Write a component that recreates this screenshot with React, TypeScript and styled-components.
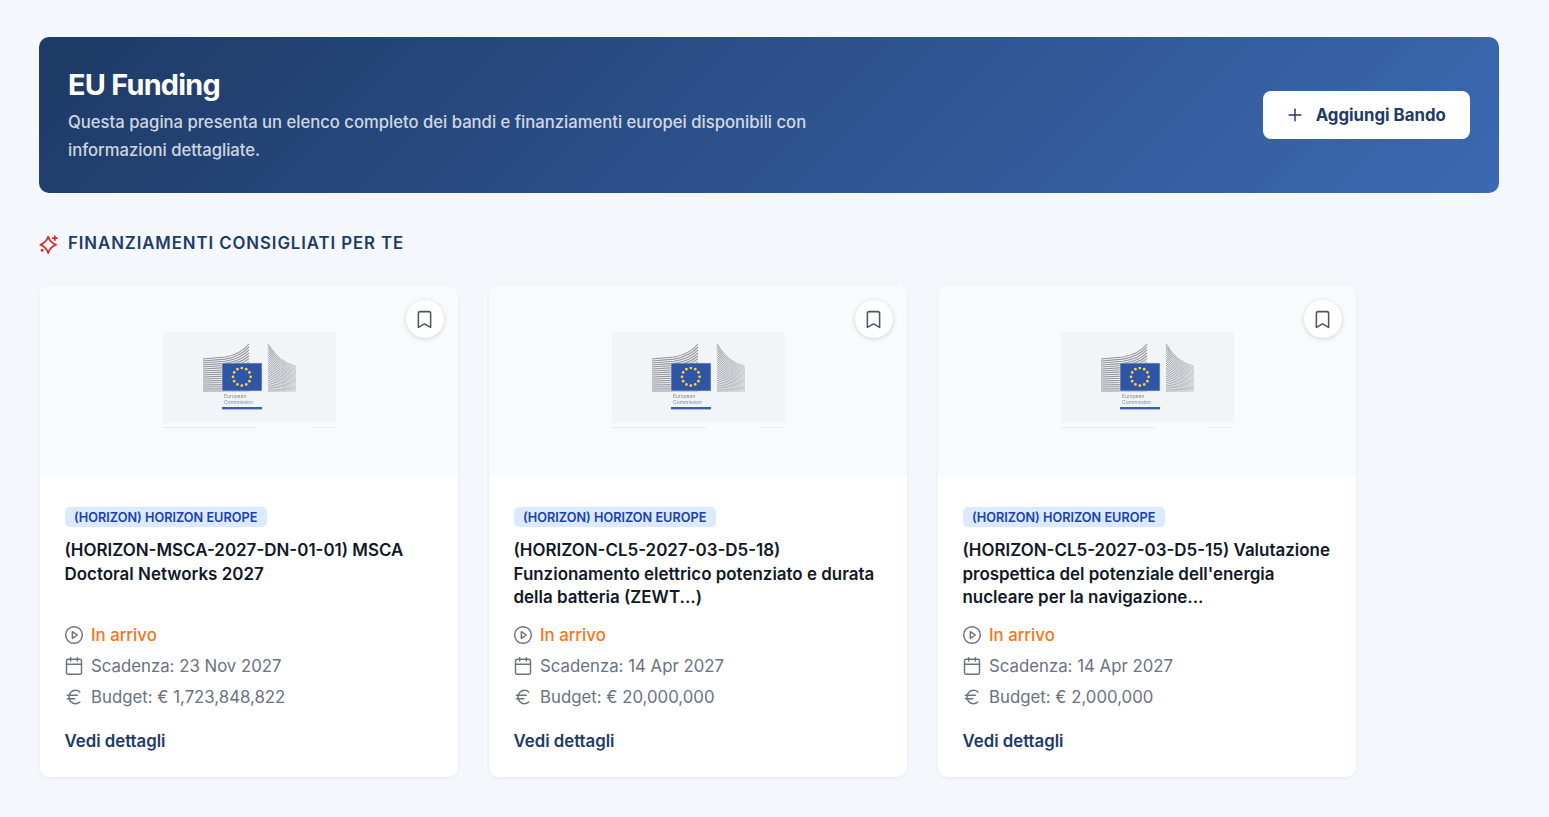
import React from "react";
import styled, { createGlobalStyle } from "styled-components";
import { Bookmark, Calendar, Euro, Plus } from "lucide-react";

const GlobalStyle = createGlobalStyle`
	html, body {
		margin: 0;
		padding: 0;
		background-color: #f4f7fc;
		font-family: Inter, "Liberation Sans", sans-serif;
	}
	* {
		box-sizing: border-box;
	}
`;

const Page = styled.div`
	padding: 37px 50px 40px 39px;
	min-height: 817px;
`;

const Banner = styled.header`
	display: flex;
	justify-content: space-between;
	align-items: center;
	height: 156px;
	padding: 0 29px;
	border-radius: 10px;
	background: linear-gradient(135deg, #1e3a66 0%, #3b69b2 100%);
`;

const BannerTitle = styled.h1`
	margin: 0 0 4px;
	font-size: 28.8px;
	line-height: 38px;
	font-weight: 700;
	letter-spacing: -0.72px;
	color: #ffffff;
`;

const BannerText = styled.p`
	margin: 0;
	max-width: 768px;
	font-size: 16.65px;
	line-height: 28px;
	font-weight: 500;
	color: rgba(255, 255, 255, 0.8);
`;

const AddButton = styled.button`
	display: flex;
	align-items: center;
	justify-content: center;
	gap: 10.5px;
	width: 207px;
	height: 48px;
	padding: 0 2px 0 0;
	border: 0;
	border-radius: 8px;
	background-color: #ffffff;
	color: #1e3a66;
	font-family: inherit;
	font-size: 16.8px;
	font-weight: 700;
`;

const SectionTitle = styled.h2`
	display: flex;
	align-items: center;
	gap: 9px;
	margin: 40px 0 31px;
	font-size: 16.8px;
	line-height: 21px;
	font-weight: 600;
	letter-spacing: 0.92px;
	text-transform: uppercase;
	color: #1e3a66;
`;

const CardRow = styled.div`
	display: flex;
	gap: 31px;
	padding-left: 1px;
`;

const Card = styled.article`
	width: 418px;
	height: 492px;
	border-radius: 10px;
	background-color: #ffffff;
	box-shadow: 0 1px 4px rgba(0, 0, 0, 0.06);
	overflow: hidden;
`;

const CardMedia = styled.div`
	position: relative;
	display: flex;
	justify-content: center;
	padding-top: 47px;
	height: 192px;
	background-color: #f9fafb;
`;

const SaveButton = styled.button`
	position: absolute;
	top: 15px;
	right: 14.5px;
	display: flex;
	align-items: center;
	justify-content: center;
	width: 38px;
	height: 38px;
	padding: 0;
	border: 0;
	border-radius: 50%;
	background-color: #ffffff;
	color: #4b5563;
	box-shadow: 0 1px 5px rgba(0, 0, 0, 0.16);
`;

const CardBody = styled.div`
	padding: 30px 24px 0 24.5px;
`;

const Badge = styled.span`
	display: inline-block;
	height: 20px;
	padding: 0 9.6px;
	border-radius: 5px;
	background-color: #dbeafe;
	color: #1e40af;
	font-size: 12.7px;
	line-height: 21px;
	font-weight: 600;
	vertical-align: top;
`;

const CardTitle = styled.h3`
	height: 72px;
	margin: 12px 0 8px;
	font-size: 16.96px;
	line-height: 23.5px;
	font-weight: 600;
	color: #111827;
`;

const MetaRow = styled.div<{ $accent?: boolean }>`
	display: flex;
	align-items: center;
	gap: 7px;
	height: 31px;
	font-size: 16.8px;
	font-weight: ${(p) => (p.$accent ? 500 : 400)};
	color: ${(p) => (p.$accent ? "#f97316" : "#6b7280")};

	svg {
		flex: none;
		margin-left: -0.5px;
		color: #6b7280;
	}
`;

const DetailLink = styled.a`
	display: block;
	margin-top: 17px;
	font-size: 16.8px;
	line-height: 24px;
	font-weight: 600;
	color: #1e3a66;
`;

const LogoBox = styled.svg`
	display: block;
	filter: blur(0.5px);
`;

const range = (n: number) => Array.from({ length: n }, (_, i) => i);

const CommissionLogo = ({ id }: { id: number }) => (
	<LogoBox width="173" height="97" viewBox="0 0 173 97">
		<defs>
			<linearGradient id={`wing${id}`} gradientUnits="userSpaceOnUse" x1="105" y1="0" x2="133" y2="0">
				<stop offset="0" stopColor="#8f9499" />
				<stop offset="1" stopColor="#c6cacf" />
			</linearGradient>
		</defs>
		<rect width="173" height="91" fill="#f2f5f8" />
		<rect y="95" width="94" height="1" fill="#e3e6ea" />
		<rect x="147" y="95" width="26" height="1" fill="#eceef1" />
		{range(17).map((i) => {
			const t = i / 16;
			const yl = 27 + 32 * t;
			const yr = 12 + 47 * t;
			return (
				<path
					key={`l${i}`}
					d={`M40 ${yl} L62 ${yl - 2 * (1 - t)} Q78 ${yl - 5 * (1 - t)} 86 ${yr}`}
					fill="none"
					stroke="#8f9499"
					strokeWidth="1.1"
				/>
			);
		})}
		{range(23).map((i) => {
			const t = i / 22;
			const yl = 12 + 47 * t;
			const yr = 34 + 25 * t;
			return (
				<path
					key={`r${i}`}
					d={`M105 ${yl} Q116 ${yl + (yr - yl) * 0.85} 133 ${yr}`}
					fill="none"
					stroke={`url(#wing${id})`}
					strokeWidth="0.9"
				/>
			);
		})}
		<rect x="59" y="31" width="40" height="28" fill="#2f55a4" stroke="#d5deee" strokeWidth="0.6" />
		{range(12).map((i) => {
			const a = (i * Math.PI) / 6;
			return (
				<circle
					key={`s${i}`}
					cx={78.8 + 8.8 * Math.cos(a)}
					cy={44.8 + 8.8 * Math.sin(a)}
					r="1.35"
					fill="#f4d93f"
				/>
			);
		})}
		<text x="61" y="65.5" fontSize="5" fontFamily="Inter, sans-serif" fill="#858c94">
			European
		</text>
		<text x="61" y="71.5" fontSize="5" fontFamily="Inter, sans-serif" fill="#858c94">
			Commission
		</text>
		<rect x="59" y="75" width="40" height="2.4" fill="#3a5fb0" />
	</LogoBox>
);

const SparkIcon = () => (
	<svg width="20" height="20" viewBox="0 0 24 24" fill="none" stroke="#dc2626" strokeWidth="2" strokeLinejoin="round" strokeLinecap="round">
		<path d="M11 3 Q13.4 10.6 20.5 13 Q13.4 15.4 11 23 Q8.6 15.4 1.5 13 Q8.6 10.6 11 3Z" />
		<path d="M19 2.5v5M16.5 5h5" />
		<circle cx="3.8" cy="19.5" r="0.8" fill="#dc2626" />
	</svg>
);

const PlayIcon = () => (
	<svg width="20" height="20" viewBox="0 0 24 24" fill="none" stroke="currentColor" strokeWidth="1.75" strokeLinejoin="round">
		<circle cx="12" cy="12" r="10" />
		<polygon points="10 8 16 12 10 16 10 8" />
	</svg>
);

interface ICall {
	title: string;
	deadline: string;
	budget: string;
}

const calls: ICall[] = [
	{
		title: "(HORIZON-MSCA-2027-DN-01-01) MSCA Doctoral Networks 2027",
		deadline: "23 Nov 2027",
		budget: "1,723,848,822",
	},
	{
		title: "(HORIZON-CL5-2027-03-D5-18) Funzionamento elettrico potenziato e durata della batteria (ZEWT...)",
		deadline: "14 Apr 2027",
		budget: "20,000,000",
	},
	{
		title: "(HORIZON-CL5-2027-03-D5-15) Valutazione prospettica del potenziale dell'energia nucleare per la navigazione...",
		deadline: "14 Apr 2027",
		budget: "2,000,000",
	},
];

export default function App() {
	return (
		<Page>
			<GlobalStyle />
			<Banner>
				<div>
					<BannerTitle>EU Funding</BannerTitle>
					<BannerText>
						Questa pagina presenta un elenco completo dei bandi e finanziamenti europei disponibili con informazioni
						dettagliate.
					</BannerText>
				</div>
				<AddButton>
					<Plus size={20} strokeWidth={1.75} />
					Aggiungi Bando
				</AddButton>
			</Banner>
			<SectionTitle>
				<SparkIcon />
				Finanziamenti consigliati per te
			</SectionTitle>
			<CardRow>
				{calls.map((call, i) => (
					<Card key={call.title}>
						<CardMedia>
							<CommissionLogo id={i} />
							<SaveButton aria-label="Salva">
								<Bookmark size={21} strokeWidth={1.75} />
							</SaveButton>
						</CardMedia>
						<CardBody>
							<Badge>(HORIZON) HORIZON EUROPE</Badge>
							<CardTitle>{call.title}</CardTitle>
							<MetaRow $accent>
								<PlayIcon />
								In arrivo
							</MetaRow>
							<MetaRow>
								<Calendar size={20} strokeWidth={1.75} />
								Scadenza: {call.deadline}
							</MetaRow>
							<MetaRow>
								<Euro size={20} strokeWidth={1.75} />
								Budget: € {call.budget}
							</MetaRow>
							<DetailLink>Vedi dettagli</DetailLink>
						</CardBody>
					</Card>
				))}
			</CardRow>
		</Page>
	);
}
